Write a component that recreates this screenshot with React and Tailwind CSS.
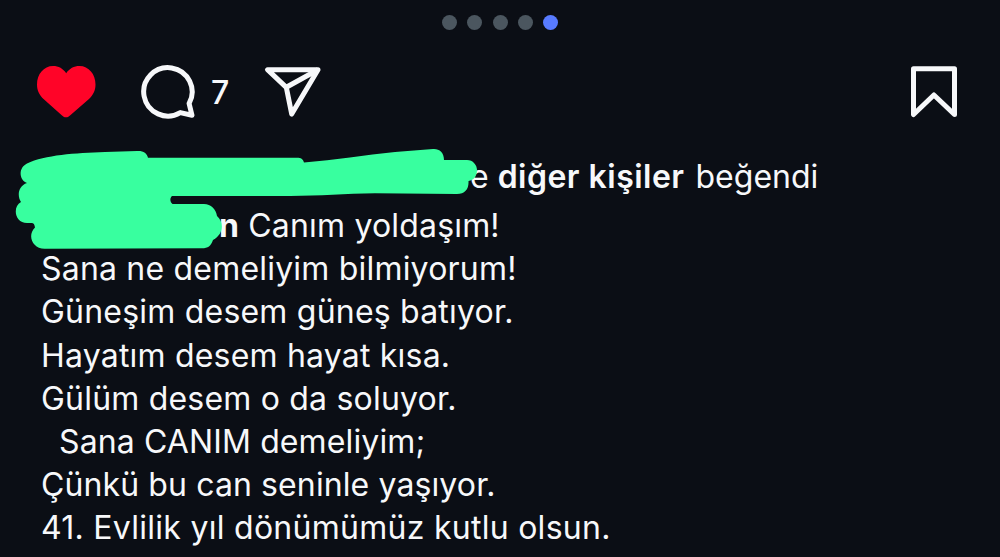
import React from "react";

const slides = [1, 2, 3, 4, 5];

const captionLines = [
  { text: "Sana ne demeliyim bilmiyorum!", className: "tracking-[0.2px]" },
  { text: "Güneşim desem güneş batıyor.", className: "tracking-[0.21px]" },
  { text: "Hayatım desem hayat kısa.", className: "tracking-[0.2px]" },
  { text: "Gülüm desem o da soluyor.", className: "tracking-[0.2px]" },
  { text: "Sana CANIM demeliyim;", className: "pl-[18px] tracking-[0.12px]" },
  { text: "Çünkü bu can seninle yaşıyor.", className: "tracking-[0.11px]" },
  {
    text: "41. Evlilik yıl dönümümüz kutlu olsun.",
    className: "tracking-[0.27px]",
  },
];

const HeartIcon = () => (
  <svg width="60" height="54" viewBox="36 65 60 54" fill="#ff0428">
    <path d="M66 117.3c-1.500 0-2.600-.700-4-1.900L43.800 99.300C39.300 95.200 37 90.400 37 84.500 37 74.200 43.800 66 53 66c5.600 0 10.200 2.500 13.200 7.300C69.300 68.500 74 66 79.500 66c9.200 0 16 8.200 16 18.500 0 5.900-2.300 10.700-6.800 14.800L70 115.400c-1.400 1.200-2.500 1.900-4 1.900z" />
  </svg>
);

const CommentIcon = () => (
  <svg
    width="56"
    height="56"
    viewBox="140 64 56 56"
    fill="none"
    stroke="#f7f8fa"
    strokeWidth="5"
    strokeLinejoin="round"
  >
    <path d="M189.100 103.500A24.200 24.200 0 1 0 180.300 112.600L192 115.300Z" />
  </svg>
);

const ShareIcon = () => (
  <svg
    width="60"
    height="54"
    viewBox="263 65 60 54"
    fill="none"
    stroke="#f7f8fa"
    strokeWidth="5"
    strokeLinejoin="round"
  >
    <path d="M267.500 69.700H318L291.700 114 286.300 87.300Z" />
    <path d="M286.300 87.300 318 69.700" />
  </svg>
);

const BookmarkIcon = () => (
  <svg
    width="48"
    height="54"
    viewBox="910 65 48 54"
    fill="none"
    stroke="#f7f8fa"
    strokeWidth="5"
    strokeLinejoin="round"
  >
    <path d="M913.500 68.800H954.500V114.500L933.900 95 913.500 114.500Z" />
  </svg>
);

// Marker strokes that hide the user names
const Redaction = () => (
  <svg
    className="absolute left-0 top-0"
    width="490"
    height="260"
    viewBox="0 0 490 260"
    fill="#38ff9f"
  >
    <path d="M27 183C19 180 18 168 27 163.500C45 155 75 153 105 152L137 151C143 150.500 147 153 148 157.700H297C301 157.700 303 159 304 162.400C335 160 365 155 395 152L433 149C439 148.500 444 152 444 160H467C473 160 477 165 477 170C477 176 474 180 468.500 181C469 189 465 194 457 194L375 193.300C345 193.500 320 196 290 196H172C170 198 169.500 201 172.500 204H204C211 204 216 209 217 216C224 222 224 234 213 240C211 246 208 248.300 202 248.300L45 248.700C32 249 27 235 35 227.500C34.500 225 34 223 31.500 223H27C15 223 12 207 21 202C17 196 18 186 27 183Z" />
  </svg>
);

const App = () => {
  return (
    <main className="relative h-[557px] w-[1000px] overflow-hidden bg-[#0b0e15] font-['Inter',sans-serif] text-[32px] text-[#f7f8fa]">
      <div className="flex justify-center gap-[10.400px] pt-[15px]">
        {slides.map((slide) => (
          <span
            key={slide}
            className={
              slide === 5
                ? "size-[15px] rounded-full bg-[#587bff]"
                : "size-[15px] rounded-full bg-[#4b565f]"
            }
          />
        ))}
      </div>

      <div className="mt-[34px] flex h-14 items-start pl-9 pr-[42px]">
        <div className="pt-px">
          <HeartIcon />
        </div>
        <div className="ml-11">
          <CommentIcon />
        </div>
        <span className="ml-[15px] w-5 font-medium leading-[57px]">7</span>
        <div className="ml-8 pt-px">
          <ShareIcon />
        </div>
        <div className="ml-auto pt-px">
          <BookmarkIcon />
        </div>
      </div>

      <p className="mt-[34.500px] whitespace-nowrap pl-[470px] leading-[43.200px]">
        e{" "}
        <span className="font-semibold tracking-[0.48px]">diğer kişiler</span>
        <span className="pl-[2px]"> beğendi</span>
      </p>

      <div className="mt-[6.300px] whitespace-nowrap pl-[41px] leading-[43.200px]">
        <p className="pl-[178px] tracking-[0.18px]">
          <span className="font-bold">n</span> Canım yoldaşım!
        </p>
        {captionLines.map((line) => (
          <p key={line.text} className={line.className}>
            {line.text}
          </p>
        ))}
      </div>

      <Redaction />
    </main>
  );
};

export default App;
